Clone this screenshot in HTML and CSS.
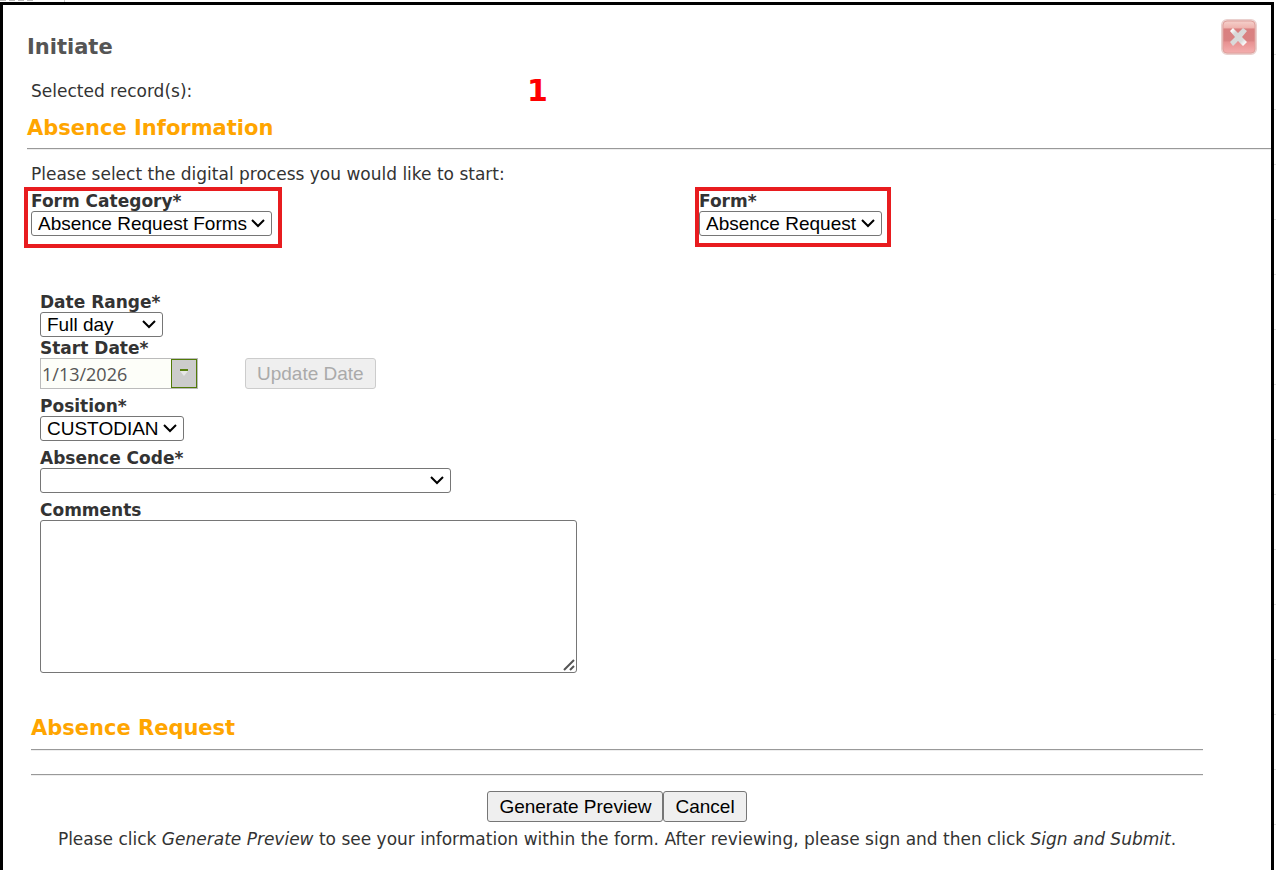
FILE: index.html
```
<!DOCTYPE html>
<html lang="en">
<head>
<meta charset="utf-8">
<title>Initiate</title>
<link rel="stylesheet" href="styles.css">
</head>
<body>
	<div class="dialog">
		<div class="top">
			<h1>Initiate</h1>
			<button type="button" class="close" aria-label="Close">
				<svg width="36" height="36" viewBox="0 0 36 36">
					<defs>
						<linearGradient id="red" x1="0" y1="0" x2="0" y2="1">
							<stop offset="0" stop-color="#f6d5d0"/>
							<stop offset=".22" stop-color="#efb5b0"/>
							<stop offset=".27" stop-color="#d98080"/>
							<stop offset=".6" stop-color="#d98282"/>
							<stop offset=".66" stop-color="#e89292"/>
							<stop offset="1" stop-color="#f5b1b1"/>
						</linearGradient>
						<linearGradient id="cross" x1="0" y1="0" x2="1" y2="1">
							<stop offset=".1" stop-color="#fff"/>
							<stop offset=".3" stop-color="#d8d8d8"/>
							<stop offset=".7" stop-color="#dcdcdc"/>
							<stop offset=".9" stop-color="#fff"/>
						</linearGradient>
					</defs>
					<rect x="1" y="1" width="34" height="34" rx="5" fill="url(#red)" stroke="#ead0ce" stroke-width="2"/>
					<rect x="2" y="2" width="32" height="32" rx="4" fill="none" stroke="#dfa09c"/>
					<path d="M9 12l3-3 5 5 5-5 4 3-5 6 5 5-4 4-5-5-5 5-3-4 5-5z" fill="url(#cross)"/>
				</svg>
			</button>
		</div>
		<div class="records">
			<p>Selected record(s):</p>
			<strong class="step">1</strong>
		</div>
		<h2 class="info">Absence Information</h2>
		<hr class="wide">
		<p class="intro">Please select the digital process you would like to start:</p>
		<div class="forms">
			<div class="cell">
				<div class="mark">
					<label for="category">Form Category*</label>
					<select id="category" class="w-category"><option>Absence Request Forms</option></select>
				</div>
			</div>
			<div class="cell">
				<div class="mark tight">
					<label for="form">Form*</label>
					<select id="form" class="w-form"><option>Absence Request</option></select>
				</div>
			</div>
		</div>

		<div class="fields">
			<div class="field">
				<label for="range">Date Range*</label>
				<select id="range" class="w-range"><option>Full day</option></select>
			</div>
			<div class="field">
				<label for="start">Start Date*</label>
				<div class="daterow">
					<div class="date">
						<input type="text" id="start" value="1/13/2026" disabled>
						<button type="button" aria-label="Open calendar" disabled>
							<svg width="10" height="10" viewBox="0 0 10 10"><path d="M1 3h8L5 8z" fill="#e6e6e6"/><path d="M1 1h8v2H1z" fill="#5a8011"/></svg>
						</button>
					</div>
					<button type="button" class="btn" disabled>Update Date</button>
				</div>
			</div>
			<div class="field gap">
				<label for="position">Position*</label>
				<select id="position" class="w-position"><option>CUSTODIAN</option></select>
			</div>
			<div class="field gap">
				<label for="code">Absence Code*</label>
				<select id="code" class="w-code"><option></option></select>
			</div>
			<div class="field gap">
				<label for="comments">Comments</label>
				<textarea id="comments"></textarea>
			</div>
		</div>

		<div class="request">
			<h2>Absence Request</h2>
			<hr>
			<hr>
			<div class="buttons">
				<button type="button" class="btn">Generate Preview</button><button type="button" class="btn">Cancel</button>
			</div>
			<p class="help">Please click <em>Generate Preview</em> to see your information within the form. After reviewing, please sign and then click <em>Sign and Submit</em>.</p>
		</div>
	</div>
</body>
</html>
```
FILE: styles.css
```
* { box-sizing:border-box;}
/* the edge of the list stays visible behind the dialog */
body { margin:0; padding:2px 2px 0 0; font:17px/20px Verdana, "DejaVu Sans", sans-serif; color:#333;
	background:
		repeating-linear-gradient(90deg, #bbb 0 6px, #fff 6px 9px) 0 0 / 36px 1px no-repeat,
		linear-gradient(#ccc, #ccc) 64px 0 / 1px 2px no-repeat,
		repeating-linear-gradient(#fff 0 54px, #ddd 54px 55px);}
h1, h2, p { margin:0;}
h1 { font-size:21px; line-height:24px; color:#555;}
h2 { font-size:21px; line-height:26px; color:#ffa500;}
hr { margin:0; height:2px; border:0; border-top:1px solid #999; border-bottom:1px solid #eee;}

.dialog { min-height:calc(100vh - 2px); border:3px solid #000; border-bottom:0; background:#fff; padding:14px 0 0 24px;}
.top { display:flex; justify-content:space-between; align-items:flex-start; padding-right:14px;}
.top h1 { padding-top:16px;}
.close { padding:0; border:0; background:none; height:36px;}
.records { display:grid; grid-template-columns:40% 1fr; align-items:center; height:40px; margin-top:12px; padding-left:4px;}
.step { font-size:30px; line-height:36px; color:#f00;}
.info { margin-top:4px;}
.wide { margin-top:7px;}
.intro { margin-top:14px; padding-left:4px;}

.forms { display:grid; grid-template-columns:671px 1fr; height:62px; margin:3px 0 0 -3px; align-items:start;}
.mark { display:inline-block; border:4px solid #e81c1f; padding:0 6px 8px 3px;}
.tight { padding:0 5px 7px 0;}
label { display:block; font-weight:bold; line-height:20px;}
select { display:block; height:25px; padding:0 6px; border:1px solid #767676; border-radius:3px; color:#000; font:19px "Liberation Sans", Arial, sans-serif; appearance:none;
	background:#fff url("data:image/svg+xml,%3Csvg xmlns='http://www.w3.org/2000/svg' width='14' height='9'%3E%3Cpath d='M1 1l6 6 6-6' fill='none' stroke='%23000' stroke-width='2'/%3E%3C/svg%3E") no-repeat right 6px center;}
.w-category { width:241px;}
.w-form { width:183px;}
.w-range { width:123px;}
.w-position { width:144px;}
.w-code { width:411px;}

.fields { margin:43px 0 0 13px;}
.field { margin-bottom:1px;}
.gap { margin-top:7px;}
.daterow { display:flex; gap:47px;}
.date { display:flex; width:158px; height:31px; border:1px solid #bbb; background:#fdfef9;}
.date input { flex:1; min-width:0; border:0; padding:1px; background:none; color:#555; font:18px "Open Sans", sans-serif;}
.date button { width:26px; padding:0; border:1px solid #527a08; background:#ccc;}
textarea { display:block; width:537px; height:153px; border:1px solid #767676; border-radius:3px; resize:both;}
textarea::-webkit-resizer { background:url("data:image/svg+xml,%3Csvg xmlns='http://www.w3.org/2000/svg' width='15' height='15'%3E%3Cpath d='M3 13L13 3M9 13l4-4' stroke='%23555' stroke-width='2'/%3E%3C/svg%3E") no-repeat right bottom;}

.btn { height:31px; padding:0 11px; border:1px solid #767676; border-radius:3px; background:#efefef; color:#000; font:19px "Liberation Sans", Arial, sans-serif;}
.btn:disabled { border-color:#ccc; color:#aaa;}
.buttons { display:flex; justify-content:center; margin-top:15px;}
.request { margin:42px 68px 0 4px;}
.request hr { margin-top:23px;}
.request h2 + hr { margin-top:8px;}
.help { margin-top:7px; text-align:center;}
```
